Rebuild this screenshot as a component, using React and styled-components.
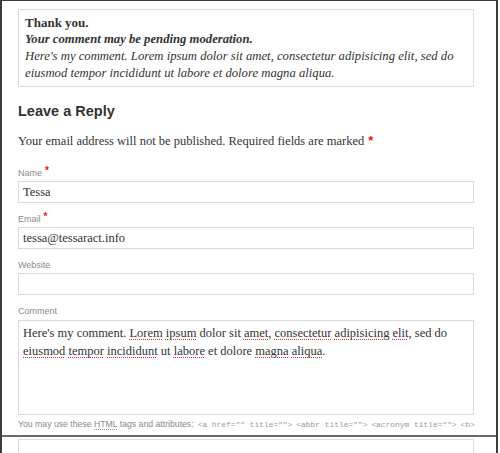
import React from 'react';
import styled, { createGlobalStyle } from 'styled-components';

const GlobalStyle = createGlobalStyle`
  html, body {
    margin: 0;
    padding: 0;
    background: #ffffff;
  }
  body {
    font-family: 'Liberation Serif', 'Times New Roman', serif;
    color: #333333;
  }
`;

const Frame = styled.div`
  width: 494px;
  height: 452px;
  border-top: 1px solid #3c3c3c;
  border-left: 2px solid #3c3c3c;
  border-right: 2px solid #3c3c3c;
  overflow: hidden;
`;

const Content = styled.div`
  padding: 8px 22px 0 16px;
`;

const Notice = styled.div`
  border: 1px solid #dddddd;
  padding: 4px 6px 4px 6px;
  font-size: 12.7px;
  line-height: 17px;
  color: #333333;
`;

const NoticeLine = styled.p`
  margin: 0;
  font-weight: ${(p) => (p.$bold ? 'bold' : 'normal')};
  font-style: ${(p) => (p.$italic ? 'italic' : 'normal')};
  font-size: ${(p) => (p.$italic ? '12.7px' : '13px')};
`;

const Heading = styled.h3`
  margin: 14px 0 0;
  font-family: 'Liberation Sans', Arial, sans-serif;
  font-size: 14.5px;
  line-height: 20px;
  font-weight: bold;
  color: #333333;
`;

const Intro = styled.p`
  margin: 12px 0 16px;
  font-size: 12.5px;
  line-height: 17px;
`;

const Required = styled.span`
  color: #ee1111;
  font-weight: bold;
  line-height: 0;
  margin-left: ${(p) => p.$gap || '3px'};
  font-family: 'Liberation Sans', Arial, sans-serif;
  font-size: ${(p) => p.$size || '13px'};
  vertical-align: ${(p) => (p.$raise ? '2px' : 'baseline')};
`;

const Field = styled.div`
  margin-bottom: 9px;
`;

const Label = styled.label`
  display: block;
  font-family: 'Liberation Sans', Arial, sans-serif;
  font-size: 9px;
  line-height: 15px;
  height: 15px;
  color: #8a8a8a;
`;

const TextInput = styled.input`
  display: block;
  box-sizing: border-box;
  width: 456px;
  height: 22px;
  margin: 0;
  padding: 0 4px;
  border: 1px solid #dadada;
  border-radius: 0;
  font-family: 'Liberation Serif', 'Times New Roman', serif;
  font-size: 12.5px;
  color: #333333;
  background: #ffffff;
  outline: none;
`;

const CommentBox = styled.div`
  box-sizing: border-box;
  width: 456px;
  height: 95px;
  padding: 3px 4px;
  border: 1px solid #dadada;
  font-size: 12.5px;
  line-height: 18px;
  color: #333333;
  margin-top: 1px;
`;

const Misspelled = styled.span`
  text-decoration: underline dotted #e42b2b;
  text-decoration-thickness: 1px;
  text-underline-offset: 2px;
`;

const Allowed = styled.p`
  margin: 3px 0 0;
  font-family: 'Liberation Sans', Arial, sans-serif;
  font-size: 8.7px;
  line-height: 12px;
  color: #8a8a8a;
  white-space: nowrap;
`;

const Abbr = styled.abbr`
  text-decoration: underline dotted #999999;
  text-underline-offset: 2px;
`;

const Code = styled.code`
  font-family: 'Liberation Mono', 'Courier New', monospace;
  font-size: 7.9px;
  color: #9a9a9a;
  margin-left: 4px;
`;

const Divider = styled.div`
  height: 2px;
  background: #6a6a6a;
  margin-top: 4px;
`;

const Lower = styled.div`
  padding: 2px 22px 0 16px;
`;

const LowerBox = styled.div`
  height: 40px;
  border: 1px solid #dedede;
  border-bottom: none;
`;

const W = ({ children }) => <Misspelled>{children}</Misspelled>;

const App = () => (
  <>
    <GlobalStyle />
    <Frame>
      <Content>
        <Notice>
          <NoticeLine $bold>Thank you.</NoticeLine>
          <NoticeLine $bold $italic>Your comment may be pending moderation.</NoticeLine>
          <NoticeLine $italic>
            Here's my comment. Lorem ipsum dolor sit amet, consectetur adipisicing elit, sed do
            eiusmod tempor incididunt ut labore et dolore magna aliqua.
          </NoticeLine>
        </Notice>

        <Heading>Leave a Reply</Heading>
        <Intro>
          Your email address will not be published. Required fields are marked
          <Required $gap="4px">*</Required>
        </Intro>

        <Field>
          <Label htmlFor="author">
            Name<Required $size="10px" $raise>*</Required>
          </Label>
          <TextInput id="author" type="text" defaultValue="Tessa" />
        </Field>
        <Field>
          <Label htmlFor="email">
            Email<Required $size="10px" $raise>*</Required>
          </Label>
          <TextInput id="email" type="text" defaultValue="tessa@tessaract.info" />
        </Field>
        <Field>
          <Label htmlFor="url">Website</Label>
          <TextInput id="url" type="text" defaultValue="" />
        </Field>

        <Label>Comment</Label>
        <CommentBox>
          Here's my comment. <W>Lorem</W> <W>ipsum</W> dolor sit <W>amet</W>,{' '}
          <W>consectetur</W> <W>adipisicing</W> <W>elit</W>, sed do <W>eiusmod</W>{' '}
          <W>tempor</W> <W>incididunt</W> ut <W>labore</W> et dolore <W>magna</W>{' '}
          <W>aliqua</W>.
        </CommentBox>
        <Allowed>
          You may use these <Abbr title="HyperText Markup Language">HTML</Abbr> tags and attributes:
          <Code>&lt;a href="" title=""&gt;</Code>
          <Code>&lt;abbr title=""&gt;</Code>
          <Code>&lt;acronym title=""&gt;</Code>
          <Code>&lt;b&gt;</Code>
        </Allowed>
      </Content>
      <Divider />
      <Lower>
        <LowerBox />
      </Lower>
    </Frame>
  </>
);

export default App;
